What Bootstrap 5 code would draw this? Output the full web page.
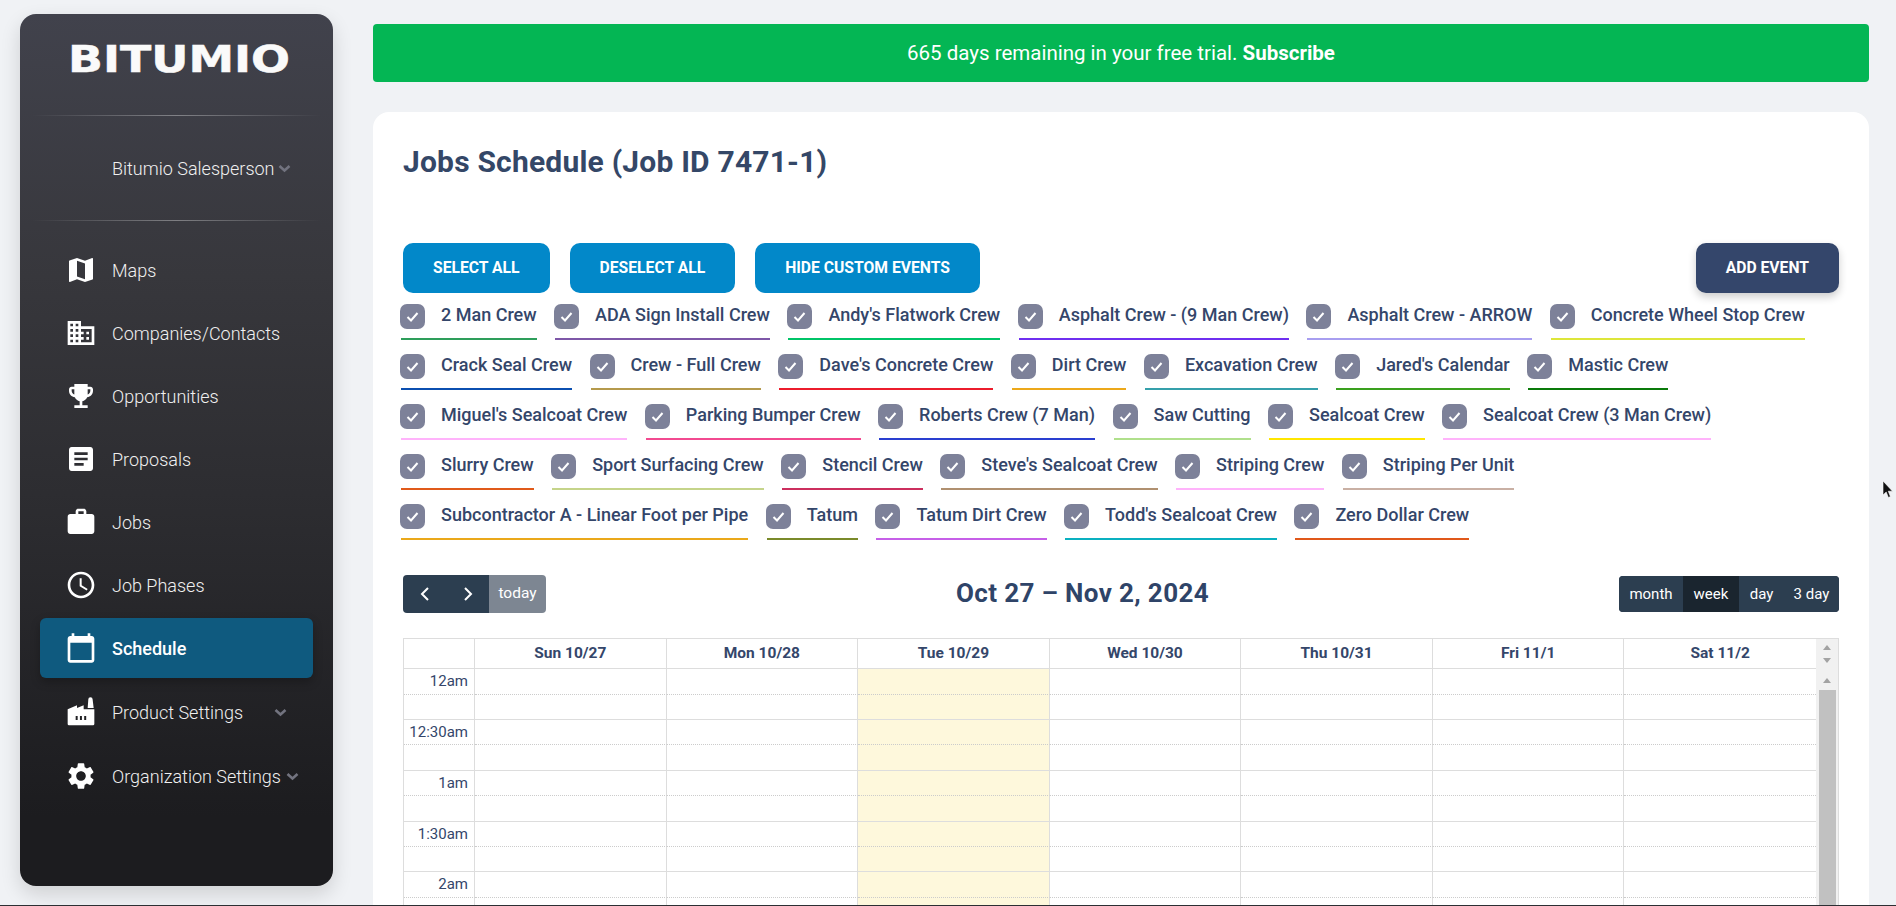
<!DOCTYPE html>
<html lang="en">
<head>
<meta charset="utf-8">
<title>Jobs Schedule</title>
<link href="https://cdn.jsdelivr.net/npm/bootstrap@5.3.0/dist/css/bootstrap.min.css" rel="stylesheet">
<style>
html,body{height:100%;overflow:hidden}
body{background:#f0f2f5;font-family:Roboto,"Liberation Sans",sans-serif;color:#344767}
.app-shell{height:906px;overflow:hidden}
.side-panel{width:313px;height:872px;margin:14px 0 0 20px;border-radius:16px;background:linear-gradient(180deg,#41424c 0%,#37373c 30%,#2d2d31 55%,#1c1c1f 92%);box-shadow:0 8px 20px rgba(0,0,0,.14);color:#f0f0f0;flex:none}
.brand-wrap{height:101px;padding:30px 0 0 48px}
.brand-mark{display:block;width:222px;height:30px;overflow:visible}
.brand-mark text{font-family:"DejaVu Sans",sans-serif;font-weight:700;font-size:38px;fill:#fafafa;stroke:#fafafa;stroke-width:.5}
.side-rule{height:1px;margin:0 12px;background:linear-gradient(90deg,rgba(255,255,255,0),rgba(255,255,255,.35) 50%,rgba(255,255,255,0))}
.user-row{height:104px;padding-left:92px;font-weight:300;font-size:18px}
.caret-icon{width:13px;height:9px;fill:none;stroke:#72737f;stroke-width:2.6;margin-left:5px;flex:none}
.user-row .caret-icon{margin-left:3px}
.side-nav{padding-top:19px}
.side-item{height:60px;margin:0 20px 3px;padding-left:25px;border-radius:6px;color:#f0f0f0;font-weight:300;font-size:18px;text-decoration:none}
.side-item svg.glyph{width:32px;height:32px;fill:#fff;margin-right:15px;flex:none}
.side-item.is-current{background:#0f5a7f;font-weight:500;color:#fff;box-shadow:0 4px 10px rgba(0,0,0,.25);margin-bottom:4px}
.side-item.is-open{margin-bottom:4px}
.side-item .caret-end{margin-left:auto;margin-right:26px}
.main-col{flex:1;min-width:0;padding:24px 27px 0 40px}
.trial-bar{height:58px;background:#04b654;color:#fff;border-radius:4px;font-size:20.5px}
.trial-bar b{font-weight:700}
.sheet{margin-top:30px;background:#fff;border-radius:16px;padding:30px 30px 0;height:900px}
.sheet-title{font-size:30px;font-weight:700;color:#344767;letter-spacing:.2px;line-height:40px;margin:0;height:101px}
.act-btn{height:50px;border:0;border-radius:10px;background:#0288c9;color:#fff;font-weight:700;font-size:15.7px;text-transform:uppercase;padding:0 30px;box-shadow:none}
.act-btn:hover{background:#0288c9;color:#fff}
.act-btn.is-dark{background:#34466b;box-shadow:0 4px 8px rgba(0,0,0,.2)}
.act-gap{gap:20px}
.crew-wrap{margin:11px 0 0 -2px;row-gap:14px;column-gap:18.5px}
.crew-tag{position:relative;height:36px;padding-left:40px;line-height:22px;font-size:18px;font-weight:500;color:#34466a;border-bottom:2px solid #000;white-space:nowrap}
.crew-box{position:absolute;left:-1px;top:0;width:25px;height:25px;border-radius:7px;background:#7d8199}
.crew-box svg{display:block;width:25px;height:25px;fill:none;stroke:#fff;stroke-width:2}
.cal-bar{margin-top:35px;height:38px}
.nav-pair{height:38px;border-radius:4px;overflow:hidden}
.cal-step{width:43px;background:#2c3e50;border:0;display:flex;align-items:center;justify-content:center;padding:0}
.cal-step svg{width:12px;height:18px;fill:none;stroke:#fff;stroke-width:2}
.cal-today{width:57px;background:#7d8692;border:0;color:#fff;font-size:15.5px;padding:0}
.cal-heading{font-size:26px;font-weight:700;color:#2f4468;margin:0;letter-spacing:.36px}
.view-set{height:36px;border-radius:4px;overflow:hidden;background:#2c3e50}
.view-opt{border:0;background:#2c3e50;color:#fff;font-size:15px;padding:0;width:64px}
.view-opt.is-on{background:#1a252f;width:56px}
.view-opt:nth-child(3){width:45px}
.view-opt:nth-child(4){width:55px}
.cal-frame{margin-top:25px;height:300px;border:1px solid #ddd;border-bottom:0}
.cal-table{table-layout:fixed;width:1412px;border-collapse:separate;border-spacing:0;flex:none;align-self:flex-start}
.cal-table th,.cal-table td{border:0 solid #ddd;border-right-width:1px;padding:0}
.cal-table th:last-child,.cal-table td:last-child{border-right-width:0}
.cal-table th{height:30px;border-bottom-width:1px;font-size:15.5px;font-weight:700;text-align:center;color:#34466a;vertical-align:middle}
.cal-table .slot-major td{border-bottom:1px dotted #ccc}
.cal-table .slot-minor td{border-bottom:1px solid #ddd}
.cal-table .row-26 td{height:26px}
.cal-table .row-25 td{height:25px}
.cal-table tr td:nth-child(4){background:#fef8dc}
.cal-table .slot-major td:first-child{text-align:right;padding-right:6px;font-size:15px;font-weight:400;line-height:24px;color:#34466a;vertical-align:top;white-space:nowrap}
.cal-scroll{flex:1;background:#f1f1f1;position:relative}
.scroll-thumb{position:absolute;left:3px;right:2px;top:51px;height:300px;background:#c1c1c1}
.scroll-arr{position:absolute;left:7px;width:0;height:0;border-left:4.5px solid transparent;border-right:4.5px solid transparent}
.scroll-arr.up{border-bottom:5px solid #a3a3a3}
.scroll-arr.down{border-top:5px solid #a3a3a3}
.scroll-a{top:6px}.scroll-b{top:19px}.scroll-c{top:39px}
.mouse-arrow{position:fixed;left:1882px;top:481px;width:11px;height:17px}
.edge-line{position:fixed;left:0;right:0;bottom:0;height:1px;background:#2c2f33}
.u1{border-color:#2e9e5b}.u2{border-color:#7e57a8}.u3{border-color:#00c468}.u4{border-color:#6f2ff0}.u5{border-color:#a89ef0}.u6{border-color:#dde63a}
.u7{border-color:#0b4fb0}.u8{border-color:#b59a4c}.u9{border-color:#ec1c2c}.u10{border-color:#eca81a}.u11{border-color:#35a0ab}.u12{border-color:#3aa01e}.u13{border-color:#0a7a0a}
.u14{border-color:#ffb3fb}.u15{border-color:#f24a90}.u16{border-color:#2a3fd0}.u17{border-color:#b0e08c}.u18{border-color:#ffe600}.u19{border-color:#ffb3fb}
.u20{border-color:#e05a1a}.u21{border-color:#c5d48a}.u22{border-color:#cc2f5e}.u23{border-color:#b09070}.u24{border-color:#ffb3fb}.u25{border-color:#c9b0a4}
.u26{border-color:#eaa81a}.u27{border-color:#7a8a2a}.u28{border-color:#c65fe8}.u29{border-color:#0ab0c0}.u30{border-color:#e0581a}
</style>
</head>
<body>
<svg width="0" height="0" class="position-absolute">
  <defs>
    <symbol id="chk" viewBox="0 0 25 25"><path d="M7.5 13l3.5 3.5 6.5-7.5"/></symbol>
    <symbol id="chev" viewBox="0 0 13 9"><path d="M1.5 2l5 4.5 5-4.5"/></symbol>
  </defs>
</svg>
<div class="app-shell d-flex">
  <aside class="side-panel">
    <div class="brand-wrap">
      <svg class="brand-mark" viewBox="0 0 222 30"><text x="0" y="28" textLength="222" lengthAdjust="spacingAndGlyphs">BITUMIO</text></svg>
    </div>
    <div class="side-rule"></div>
    <div class="user-row d-flex align-items-center">Bitumio Salesperson<svg class="caret-icon"><use href="#chev"/></svg></div>
    <div class="side-rule"></div>
    <nav class="side-nav">
      <a class="side-item d-flex align-items-center" href="#"><svg class="glyph" viewBox="0 0 24 24"><path d="M20.5 3l-.16.03L15 5.1 9 3 3.36 4.9c-.21.07-.36.25-.36.48V20.5c0 .28.22.5.5.5l.16-.03L9 18.9l6 2.1 5.64-1.9c.21-.07.36-.25.36-.48V3.5c0-.28-.22-.5-.5-.5zM15 19l-6-2.11V5l6 2.11V19z"/></svg>Maps</a>
      <a class="side-item d-flex align-items-center" href="#"><svg class="glyph" viewBox="0 0 24 24"><path d="M12 7V3H2v18h20V7H12zM6 19H4v-2h2v2zm0-4H4v-2h2v2zm0-4H4V9h2v2zm0-4H4V5h2v2zm4 12H8v-2h2v2zm0-4H8v-2h2v2zm0-4H8V9h2v2zm0-4H8V5h2v2zm10 12h-8v-2h2v-2h-2v-2h2v-2h-2V9h8v10zm-2-8h-2v2h2v-2zm0 4h-2v2h2v-2z"/></svg>Companies/Contacts</a>
      <a class="side-item d-flex align-items-center" href="#"><svg class="glyph" viewBox="0 0 24 24"><path d="M19 5h-2V3H7v2H5c-1.1 0-2 .9-2 2v1c0 2.55 1.92 4.63 4.39 4.94.63 1.5 1.98 2.63 3.61 2.96V19H7v2h10v-2h-4v-3.1c1.63-.33 2.98-1.46 3.61-2.96C19.08 12.63 21 10.55 21 8V7c0-1.1-.9-2-2-2zM5 8V7h2v3.82C5.84 10.4 5 9.3 5 8zm14 0c0 1.3-.84 2.4-2 2.82V7h2v1z"/></svg>Opportunities</a>
      <a class="side-item d-flex align-items-center" href="#"><svg class="glyph" viewBox="0 0 24 24"><path d="M19 3H5c-1.1 0-2 .9-2 2v14c0 1.1.9 2 2 2h14c1.1 0 2-.9 2-2V5c0-1.1-.9-2-2-2zm-5 14H7v-2h7v2zm3-4H7v-2h10v2zm0-4H7V7h10v2z"/></svg>Proposals</a>
      <a class="side-item d-flex align-items-center" href="#"><svg class="glyph" viewBox="0 0 24 24"><path d="M20 6h-4V4c0-1.11-.89-2-2-2h-4c-1.11 0-2 .89-2 2v2H4c-1.11 0-1.99.89-1.99 2L2 19c0 1.11.89 2 2 2h16c1.11 0 2-.89 2-2V8c0-1.11-.89-2-2-2zm-6 0h-4V4h4v2z"/></svg>Jobs</a>
      <a class="side-item d-flex align-items-center" href="#"><svg class="glyph" viewBox="0 0 24 24"><path d="M11.99 2C6.47 2 2 6.48 2 12s4.47 10 9.99 10C17.52 22 22 17.52 22 12S17.52 2 11.99 2zM12 20c-4.42 0-8-3.58-8-8s3.58-8 8-8 8 3.58 8 8-3.58 8-8 8zm.5-13H11v6l5.25 3.15.75-1.23-4.5-2.67z"/></svg>Job Phases</a>
      <a class="side-item is-current d-flex align-items-center" href="#"><svg class="glyph" viewBox="0 0 24 24"><path d="M20 3h-1V1h-2v2H7V1H5v2H4c-1.1 0-2 .9-2 2v16c0 1.1.9 2 2 2h16c1.1 0 2-.9 2-2V5c0-1.1-.9-2-2-2zm0 18H4V8h16v13z"/></svg>Schedule</a>
      <a class="side-item is-open d-flex align-items-center" href="#"><svg class="glyph" viewBox="0 0 24 24"><path fill-rule="evenodd" d="M22 10v11a1 1 0 0 1-1 1H3a1 1 0 0 1-1-1V10l7-3v2l5-2v3h8zM17 9l.5-6.5a1.6 1.6 0 0 1 3.2 0L21.5 9zM8 15v3h1.5v-3zM11.2 15v3h1.5v-3zM14.4 15v3h1.5v-3z"/></svg>Product Settings<svg class="caret-icon caret-end"><use href="#chev"/></svg></a>
      <a class="side-item d-flex align-items-center" href="#"><svg class="glyph" viewBox="0 0 24 24"><path d="M19.14 12.94c.04-.3.06-.61.06-.94 0-.32-.02-.64-.07-.94l2.03-1.58c.18-.14.23-.41.12-.61l-1.92-3.32c-.12-.22-.37-.29-.59-.22l-2.39.96c-.5-.38-1.03-.7-1.62-.94l-.36-2.54c-.04-.24-.24-.41-.48-.41h-3.84c-.24 0-.43.17-.47.41l-.36 2.54c-.59.24-1.13.57-1.62.94l-2.39-.96c-.22-.08-.47 0-.59.22L2.74 8.87c-.12.21-.08.47.12.61l2.03 1.58c-.05.3-.09.63-.09.94s.02.64.07.94l-2.03 1.58c-.18.14-.23.41-.12.61l1.92 3.32c.12.22.37.29.59.22l2.39-.96c.5.38 1.03.7 1.62.94l.36 2.54c.05.24.24.41.48.41h3.84c.24 0 .44-.17.47-.41l.36-2.54c.59-.24 1.13-.56 1.62-.94l2.39.96c.22.08.47 0 .59-.22l1.92-3.32c.12-.22.07-.47-.12-.61l-2.01-1.58zM12 15.6c-1.98 0-3.6-1.62-3.6-3.6s1.62-3.6 3.6-3.6 3.6 1.62 3.6 3.6-1.62 3.6-3.6 3.6z"/></svg>Organization Settings<svg class="caret-icon"><use href="#chev"/></svg></a>
    </nav>
  </aside>
  <main class="main-col">
    <div class="trial-bar d-flex align-items-center justify-content-center"><span>665 days remaining in your free trial. <b>Subscribe</b></span></div>
    <section class="sheet">
      <h3 class="sheet-title">Jobs Schedule (Job ID 7471-1)</h3>
      <div class="d-flex">
        <div class="d-flex act-gap me-auto">
          <button class="btn act-btn">Select All</button>
          <button class="btn act-btn">Deselect All</button>
          <button class="btn act-btn">Hide Custom Events</button>
        </div>
        <button class="btn act-btn is-dark">Add Event</button>
      </div>
      <div class="crew-wrap d-flex flex-wrap">
        <div class="crew-tag u1"><span class="crew-box"><svg><use href="#chk"/></svg></span>2 Man Crew</div>
        <div class="crew-tag u2"><span class="crew-box"><svg><use href="#chk"/></svg></span>ADA Sign Install Crew</div>
        <div class="crew-tag u3"><span class="crew-box"><svg><use href="#chk"/></svg></span>Andy's Flatwork Crew</div>
        <div class="crew-tag u4"><span class="crew-box"><svg><use href="#chk"/></svg></span>Asphalt Crew - (9 Man Crew)</div>
        <div class="crew-tag u5"><span class="crew-box"><svg><use href="#chk"/></svg></span>Asphalt Crew - ARROW</div>
        <div class="crew-tag u6"><span class="crew-box"><svg><use href="#chk"/></svg></span>Concrete Wheel Stop Crew</div>
        <div class="crew-tag u7"><span class="crew-box"><svg><use href="#chk"/></svg></span>Crack Seal Crew</div>
        <div class="crew-tag u8"><span class="crew-box"><svg><use href="#chk"/></svg></span>Crew - Full Crew</div>
        <div class="crew-tag u9"><span class="crew-box"><svg><use href="#chk"/></svg></span>Dave's Concrete Crew</div>
        <div class="crew-tag u10"><span class="crew-box"><svg><use href="#chk"/></svg></span>Dirt Crew</div>
        <div class="crew-tag u11"><span class="crew-box"><svg><use href="#chk"/></svg></span>Excavation Crew</div>
        <div class="crew-tag u12"><span class="crew-box"><svg><use href="#chk"/></svg></span>Jared's Calendar</div>
        <div class="crew-tag u13"><span class="crew-box"><svg><use href="#chk"/></svg></span>Mastic Crew</div>
        <div class="crew-tag u14"><span class="crew-box"><svg><use href="#chk"/></svg></span>Miguel's Sealcoat Crew</div>
        <div class="crew-tag u15"><span class="crew-box"><svg><use href="#chk"/></svg></span>Parking Bumper Crew</div>
        <div class="crew-tag u16"><span class="crew-box"><svg><use href="#chk"/></svg></span>Roberts Crew (7 Man)</div>
        <div class="crew-tag u17"><span class="crew-box"><svg><use href="#chk"/></svg></span>Saw Cutting</div>
        <div class="crew-tag u18"><span class="crew-box"><svg><use href="#chk"/></svg></span>Sealcoat Crew</div>
        <div class="crew-tag u19"><span class="crew-box"><svg><use href="#chk"/></svg></span>Sealcoat Crew (3 Man Crew)</div>
        <div class="crew-tag u20"><span class="crew-box"><svg><use href="#chk"/></svg></span>Slurry Crew</div>
        <div class="crew-tag u21"><span class="crew-box"><svg><use href="#chk"/></svg></span>Sport Surfacing Crew</div>
        <div class="crew-tag u22"><span class="crew-box"><svg><use href="#chk"/></svg></span>Stencil Crew</div>
        <div class="crew-tag u23"><span class="crew-box"><svg><use href="#chk"/></svg></span>Steve's Sealcoat Crew</div>
        <div class="crew-tag u24"><span class="crew-box"><svg><use href="#chk"/></svg></span>Striping Crew</div>
        <div class="crew-tag u25"><span class="crew-box"><svg><use href="#chk"/></svg></span>Striping Per Unit</div>
        <div class="crew-tag u26"><span class="crew-box"><svg><use href="#chk"/></svg></span>Subcontractor A - Linear Foot per Pipe</div>
        <div class="crew-tag u27"><span class="crew-box"><svg><use href="#chk"/></svg></span>Tatum</div>
        <div class="crew-tag u28"><span class="crew-box"><svg><use href="#chk"/></svg></span>Tatum Dirt Crew</div>
        <div class="crew-tag u29"><span class="crew-box"><svg><use href="#chk"/></svg></span>Todd's Sealcoat Crew</div>
        <div class="crew-tag u30"><span class="crew-box"><svg><use href="#chk"/></svg></span>Zero Dollar Crew</div>
      </div>
      <div class="cal-bar d-flex align-items-center justify-content-between">
        <div class="nav-pair d-flex">
          <button class="cal-step" aria-label="prev"><svg viewBox="0 0 12 18"><path d="M9 3L3 9l6 6"/></svg></button>
          <button class="cal-step" aria-label="next"><svg viewBox="0 0 12 18"><path d="M3 3l6 6-6 6"/></svg></button>
          <button class="cal-today">today</button>
        </div>
        <h2 class="cal-heading">Oct 27 – Nov 2, 2024</h2>
        <div class="view-set d-flex">
          <button class="view-opt">month</button>
          <button class="view-opt is-on">week</button>
          <button class="view-opt">day</button>
          <button class="view-opt">3 day</button>
        </div>
      </div>
      <div class="cal-frame d-flex">
        <table class="cal-table">
          <colgroup><col style="width:71px"><col span="7"></colgroup>
          <tr><th></th><th>Sun 10/27</th><th>Mon 10/28</th><th>Tue 10/29</th><th>Wed 10/30</th><th>Thu 10/31</th><th>Fri 11/1</th><th>Sat 11/2</th></tr>
          <tr class="slot-major row-26"><td>12am</td><td></td><td></td><td></td><td></td><td></td><td></td><td></td></tr>
          <tr class="slot-minor row-25"><td></td><td></td><td></td><td></td><td></td><td></td><td></td><td></td></tr>
          <tr class="slot-major row-25"><td>12:30am</td><td></td><td></td><td></td><td></td><td></td><td></td><td></td></tr>
          <tr class="slot-minor row-26"><td></td><td></td><td></td><td></td><td></td><td></td><td></td><td></td></tr>
          <tr class="slot-major row-25"><td>1am</td><td></td><td></td><td></td><td></td><td></td><td></td><td></td></tr>
          <tr class="slot-minor row-26"><td></td><td></td><td></td><td></td><td></td><td></td><td></td><td></td></tr>
          <tr class="slot-major row-25"><td>1:30am</td><td></td><td></td><td></td><td></td><td></td><td></td><td></td></tr>
          <tr class="slot-minor row-25"><td></td><td></td><td></td><td></td><td></td><td></td><td></td><td></td></tr>
          <tr class="slot-major row-26"><td>2am</td><td></td><td></td><td></td><td></td><td></td><td></td><td></td></tr>
          <tr class="slot-minor row-25"><td></td><td></td><td></td><td></td><td></td><td></td><td></td><td></td></tr>
        </table>
        <div class="cal-scroll">
          <span class="scroll-arr up scroll-a"></span>
          <span class="scroll-arr down scroll-b"></span>
          <span class="scroll-arr up scroll-c"></span>
          <div class="scroll-thumb"></div>
        </div>
      </div>
    </section>
  </main>
</div>
<svg class="mouse-arrow" viewBox="0 0 11 17"><path d="M1 0v14l3.2-3 2.2 5.5 2-.9L6.3 10.2H10.5z" fill="#111" stroke="#fff" stroke-width=".6"/></svg>
<div class="edge-line"></div>
<script src="https://cdn.jsdelivr.net/npm/bootstrap@5.3.0/dist/js/bootstrap.bundle.min.js"></script>
</body>
</html>
